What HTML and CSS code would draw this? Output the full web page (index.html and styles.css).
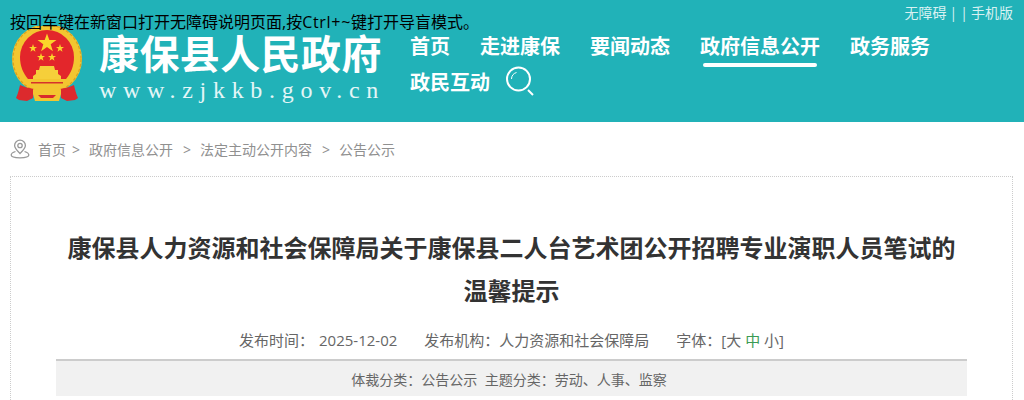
FILE: index.html
```html
<!DOCTYPE html>
<html lang="zh-CN">
<head>
<meta charset="utf-8">
<title>康保县人民政府</title>
<link rel="stylesheet" href="styles.css">
</head>
<body>
<header class="header">
  <p class="skip">按回车键在新窗口打开无障碍说明页面,按<span class="keys">Ctrl+~</span>键打开导盲模式。</p>
  <div class="brand">
    <svg class="emblem" viewBox="0 0 70 78" width="70" height="78" aria-hidden="true">
      <circle cx="35" cy="33" r="35" fill="#f3c630"/>
      <circle cx="35" cy="33" r="34" fill="none" stroke="#dc9f1e" stroke-width="1.200" stroke-dasharray="3 2"/>
      <path d="M8 31a27 27 0 0 1 54 0c0 9-3 16-8 22H16C11 47 8 40 8 31z" fill="#e3262b"/>
      <polygon points="35,7.500 37.300,14 44.500,14 38.700,18.300 40.900,25.200 35,21 29.100,25.200 31.300,18.300 25.500,14 32.700,14" fill="#fbd52a"/>
      <polygon points="21,18 22,21 25,21 22.600,22.800 23.500,25.700 21,24 18.500,25.700 19.400,22.800 17,21 20,21" fill="#fbd52a"/>
      <polygon points="48,18 49,21 52,21 49.600,22.800 50.500,25.700 48,24 45.500,25.700 46.400,22.800 44,21 47,21" fill="#fbd52a"/>
      <polygon points="29,27 30,30 33,30 30.600,31.800 31.500,34.700 29,33 26.500,34.700 27.400,31.800 25,30 28,30" fill="#fbd52a"/>
      <polygon points="40,27 41,30 44,30 41.600,31.800 42.500,34.700 40,33 37.500,34.700 38.400,31.800 36,30 39,30" fill="#fbd52a"/>
      <path d="M28 40h14l1 4h3v4l3 2v3H21v-3l3-2v-4h3z" fill="#f6cf3a"/>
      <path d="M13 53h44l-3 8H16z" fill="#f3c630"/>
      <path d="M19 56h32v1.500H19z" fill="#d6322c"/>
      <path d="M8 59c4 2 9 3 14 4l-1 9-6 3-8-1-3-2c2-4 3-9 4-13z" fill="#dc2a2d"/>
      <path d="M62 59c-4 2-9 3-14 4l1 9 6 3 8-1 3-2c-2-4-3-9-4-13z" fill="#dc2a2d"/>
      <path d="M21 63c6 2 22 2 28 0v5l-2 7H23l-2-7z" fill="#f3c630"/>
      <path d="M26 69h18l-3 3H29z" fill="#d92a2c"/>
    </svg>
    <div class="site">
      <div class="site-name">康保县人民政府</div>
      <div class="site-url">www.zjkkb.gov.cn</div>
    </div>
  </div>
  <div class="side">
    <div class="tools"><span>无障碍</span><span class="sep">|</span><span class="sep">|</span><span>手机版</span></div>
    <nav class="nav">
      <a class="nav-item">首页</a>
      <a class="nav-item">走进康保</a>
      <a class="nav-item">要闻动态</a>
      <a class="nav-item active">政府信息公开</a>
      <a class="nav-item">政务服务</a>
      <a class="nav-item">政民互动</a>
      <svg class="search" viewBox="0 0 30 30" width="30" height="30" aria-hidden="true">
        <circle cx="13.500" cy="13" r="11.500" fill="none" stroke="#fff" stroke-width="2"/>
        <path d="M6.500 13a7 7 0 0 1 5-6.500" fill="none" stroke="#fff" stroke-width="1"/>
        <path d="M23 24l5 5" stroke="#fff" stroke-width="2"/>
      </svg>
    </nav>
  </div>
</header>

<div class="crumbs">
  <svg class="pin" viewBox="0 0 20 20" width="20" height="20" aria-hidden="true">
    <path d="M10 14.500C7 11.500 4.600 9.500 4.600 6.600a5.400 5.400 0 0 1 10.800 0c0 2.900-2.400 4.900-5.400 7.900z" fill="none" stroke="#999" stroke-width="1.300"/>
    <circle cx="10" cy="6.500" r="2.200" fill="none" stroke="#999" stroke-width="1.300"/>
    <path d="M5.500 12.500C3 13.300 1.200 14.500 1.200 16c0 1.800 3 2.800 8.800 2.800s8.800-1 8.800-2.800c0-1.500-1.800-2.700-4.300-3.500" fill="none" stroke="#999" stroke-width="1.300"/>
  </svg>
  <span class="crumb">首页</span><span class="arrow first">&gt;</span>
  <span class="crumb">政府信息公开</span><span class="arrow">&gt;</span>
  <span class="crumb">法定主动公开内容</span><span class="arrow">&gt;</span>
  <span class="crumb">公告公示</span>
</div>

<main class="article">
  <h1 class="title">康保县人力资源和社会保障局关于康保县二人台艺术团公开招聘专业演职人员笔试的温馨提示</h1>
  <div class="meta">
    <span class="meta-item">发布时间：<span class="date">2025-12-02</span></span>
    <span class="meta-item">发布机构：人力资源和社会保障局</span>
    <span class="meta-item">字体：[大 <span class="current">中</span> 小]</span>
  </div>
  <div class="tags">体裁分类：公告公示&nbsp;&nbsp;主题分类：劳动、人事、监察</div>
</main>
</body>
</html>
```

FILE: styles.css
```css
* { box-sizing: border-box; }
html, body { margin: 0; padding: 0; }
body {
  height: 400px;
  overflow: hidden;
  background: #fff;
  font-family: "Open Sans", "Noto Sans CJK SC", sans-serif;
  color: #333;
}
.header {
  position: relative;
  display: flex;
  height: 122px;
  background: #21b2b8;
}
.skip {
  position: absolute;
  left: 10px;
  top: 10px;
  z-index: 1;
  margin: 0;
  font-size: 16px;
  line-height: 24px;
  color: #000;
  white-space: nowrap;
}
.keys { letter-spacing: 0.700px; }
.brand {
  display: flex;
  width: 410px;
  padding: 26px 0 0 12px;
}
.emblem { flex: none; }
.site { margin-left: 17px; }
.site-name {
  margin-top: 4px;
  font-size: 40px;
  line-height: 48px;
  letter-spacing: 0.400px;
  font-weight: 700;
  color: #fff;
  white-space: nowrap;
}
.site-url {
  font-family: "Liberation Serif", serif;
  font-size: 24px;
  line-height: 24px;
  letter-spacing: 6.700px;
  color: #e4f6f7;
  white-space: nowrap;
}
.side { flex: 1; display: flex; flex-direction: column; }
.tools {
  display: flex;
  justify-content: flex-end;
  gap: 3px;
  height: 29px;
  padding: 3px 11px 0 0;
  font-size: 14px;
  line-height: 20px;
  color: #d8f1f2;
}
.nav {
  display: flex;
  flex-wrap: wrap;
  align-items: flex-start;
  column-gap: 30px;
  width: 560px;
}
.nav-item {
  position: relative;
  font-size: 20px;
  line-height: 36px;
  font-weight: 700;
  color: #fff;
  white-space: nowrap;
}
.nav-item.active::after {
  content: "";
  position: absolute;
  left: 3px;
  right: 3px;
  bottom: -2px;
  height: 4px;
  border-radius: 2px;
  background: #fff;
}
.search { margin: 1px 0 0 -15px; }
.crumbs {
  display: flex;
  align-items: center;
  height: 54px;
  padding-left: 10px;
  font-size: 14px;
  color: #909090;
  white-space: nowrap;
}
.pin { flex: none; margin-right: 8px; }
.arrow { margin: 0 9px 0 10px; }
.arrow.first { margin: 0 9px 0 6px; }
.article {
  margin: 0 11px 0 10px;
  height: 300px;
  padding: 49px 45px 0;
  border: 1px dotted #ccc;
}
.title {
  margin: 0;
  font-size: 24px;
  line-height: 43px;
  font-weight: 700;
  text-align: center;
  color: #333;
}
.meta {
  display: flex;
  justify-content: center;
  gap: 27px;
  margin-top: 13px;
  height: 36px;
  font-size: 15px;
  line-height: 30px;
  color: #666;
  border-bottom: 2px solid #ccc;
}
.date { margin-left: 5px; }
.current { color: #3a9b54; }
.tags {
  height: 35px;
  padding-right: 5px;
  background: #f1f1f1;
  font-size: 14px;
  line-height: 38px;
  text-align: center;
  color: #666;
}
```
